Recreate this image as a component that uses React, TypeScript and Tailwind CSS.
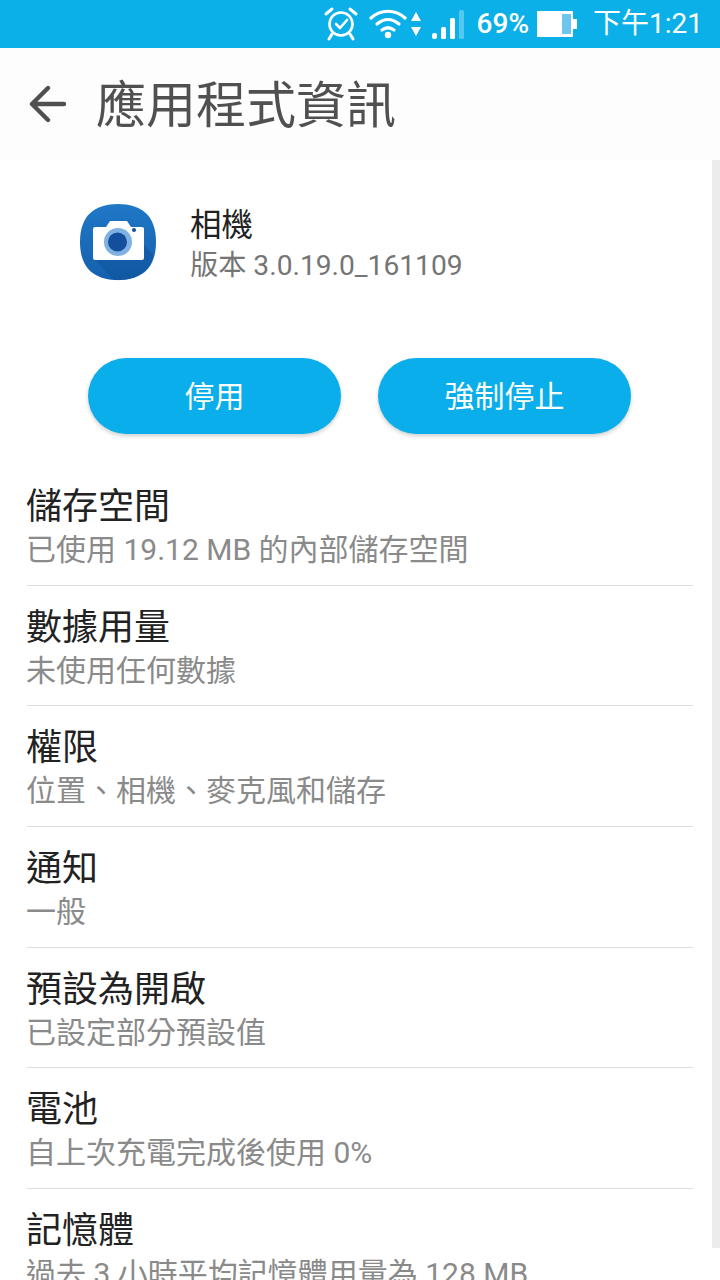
import React from "react";

const font = { fontFamily: '"Roboto", "Noto Sans CJK TC", sans-serif' };

const rows = [
  ["儲存空間", "已使用 19.12 MB 的內部儲存空間"],
  ["數據用量", "未使用任何數據"],
  ["權限", "位置、相機、麥克風和儲存"],
  ["通知", "一般"],
  ["預設為開啟", "已設定部分預設值"],
  ["電池", "自上次充電完成後使用 0%"],
  ["記憶體", "過去 3 小時平均記憶體用量為 128 MB"],
];

function Alarm() {
  return (
    <svg width="36" height="36" viewBox="0 0 36 36" fill="none" stroke="white" strokeWidth="2.6" strokeLinecap="round" strokeLinejoin="round">
      <circle cx="18" cy="18" r="11.5" />
      <path d="M13 18l4 4 7-8" />
      <path d="M3 8l6-5M33 8l-6-5M9 28l-3 5M27 28l3 5" strokeWidth="3" />
    </svg>
  );
}

function Wifi() {
  return (
    <svg width="38" height="32" viewBox="0 0 38 32" fill="none" stroke="white" strokeWidth="3.2" strokeLinecap="round">
      <path d="M2 10c10-9 24-9 34 0" />
      <path d="M8 16c7-6 15-6 22 0" />
      <path d="M13 22c4-3 8-3 12 0" />
      <circle cx="19" cy="27" r="3.2" fill="white" stroke="none" />
    </svg>
  );
}

function Arrows() {
  return (
    <svg width="12" height="28" viewBox="0 0 12 28" fill="white">
      <path d="M6 2l5 9H1z" />
      <path d="M6 26l5-9H1z" />
    </svg>
  );
}

function Signal() {
  return (
    <svg width="34" height="32" viewBox="0 0 34 32">
      <rect x="1" y="25" width="5" height="6" rx="2" fill="white" />
      <rect x="10" y="19" width="5" height="12" rx="1.5" fill="white" />
      <rect x="19" y="10" width="5" height="21" rx="1.5" fill="white" />
      <rect x="28" y="2" width="5" height="29" rx="1.5" fill="white" fillOpacity="0.3" />
    </svg>
  );
}

function Battery() {
  return (
    <svg width="40" height="26" viewBox="0 0 40 26">
      <rect x="0" y="0" width="36" height="26" rx="1" fill="white" />
      <rect x="25" y="3" width="9" height="20" fill="#6cc6ee" />
      <rect x="36" y="8" width="4" height="10" fill="white" />
    </svg>
  );
}

function CameraIcon() {
  return (
    <svg width="78" height="78" viewBox="0 0 78 78">
      <defs>
        <linearGradient id="camBg" x1="0" y1="0" x2="0" y2="1">
          <stop offset="0" stopColor="#1f78c6" />
          <stop offset="1" stopColor="#1460ae" />
        </linearGradient>
      </defs>
      <path d="M39 1C62 1 77 12 77 39S62 77 39 77 1 66 1 39 16 1 39 1z" fill="url(#camBg)" />
      <path d="M14 55L35 77C50 78 68 74 75 52L64 41V57z" fill="#0f4f96" fillOpacity="0.45" />
      <path d="M16 24h11l4-6h17l4 6h11a2 2 0 0 1 2 2v29a2 2 0 0 1-2 2H16a2 2 0 0 1-2-2V26a2 2 0 0 1 2-2z" fill="white" />
      <circle cx="39" cy="39" r="14" fill="#7fb2e3" />
      <circle cx="38.5" cy="39" r="9.5" fill="#134f9d" />
      <circle cx="55" cy="27" r="2" fill="#134f9d" />
    </svg>
  );
}

export default function App() {
  return (
    <div className="relative w-[720px] h-[1280px] overflow-hidden bg-white" style={font}>
      <div className="h-[48px] bg-[#0cb0e8] flex items-center justify-end text-white pr-[17px]">
        <Alarm />
        <div className="ml-[10px] mr-[3px]"><Wifi /></div>
        <Arrows />
        <div className="ml-[9px]"><Signal /></div>
        <span className="ml-[12px] text-[28px] leading-none font-medium">69%</span>
        <div className="ml-[8px]"><Battery /></div>
        <span className="ml-[16px] text-[28px] leading-none">下午1:21</span>
      </div>

      <div className="h-[112px] bg-[#fdfdfd] flex items-center pl-[29px]">
        <svg width="38" height="38" viewBox="0 0 38 38" fill="none" stroke="#505050" strokeWidth="4.4" strokeLinecap="round" strokeLinejoin="round">
          <path d="M3 19h32M19 3L3 19l16 16" />
        </svg>
        <h1 className="ml-[29px] pt-[3px] text-[50px] leading-none text-[#505050]">應用程式資訊</h1>
      </div>

      <div className="flex items-start h-[198px] pl-[79px] pt-[43px]">
        <CameraIcon />
        <div className="ml-[33px] pt-[5px]">
          <div className="text-[31.5px] leading-[36px] text-[#222222]">相機</div>
          <div className="text-[28.2px] leading-[36px] text-[#757575] mt-[4px]">版本 3.0.19.0_161109</div>
        </div>
      </div>

      <div className="flex pl-[88px] gap-[37px]">
        <div className="w-[253px] h-[76px] rounded-full bg-[#0aaeea] shadow-[0_2px_4px_rgba(0,0,0,0.2)] flex items-center justify-center text-white text-[30px]">停用</div>
        <div className="w-[253px] h-[76px] rounded-full bg-[#0aaeea] shadow-[0_2px_4px_rgba(0,0,0,0.2)] flex items-center justify-center text-white text-[30px]">強制停止</div>
      </div>

      <div className="mt-[30.9px] ml-[27px] w-[666px]">
        {rows.map(([title, sub], i) => (
          <div key={title} className={`h-[120.7px] pt-[20px] ${i < rows.length - 1 ? "border-b border-[#dcdcdc]" : ""}`}>
            <div className="text-[36px] leading-[44px] -ml-[1px] text-[#222222] whitespace-nowrap">{title}</div>
            <div className="text-[30px] leading-[38px] mt-[2px] -ml-[1px] text-[#8a8a8a] whitespace-nowrap">{sub}</div>
          </div>
        ))}
      </div>

      <div className="absolute right-0 top-[160px] w-[8px] h-[1088px] bg-[#ececec]" />
    </div>
  );
}
